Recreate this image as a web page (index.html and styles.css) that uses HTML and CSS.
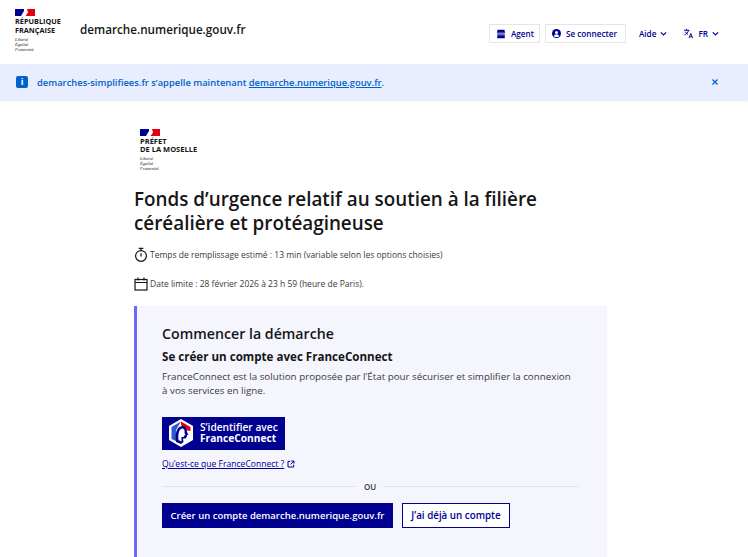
FILE: index.html
```html
<!DOCTYPE html>
<html lang="fr">
  <head>
    <meta charset="UTF-8" />
    <meta name="viewport" content="width=device-width, initial-scale=1.0" />
    <title>demarche.numerique.gouv.fr</title>
    <link rel="stylesheet" href="styles.css">
  </head>
  <body>
    <header class="header">
      <div class="brand">
        <div class="marianne">
          <svg class="flag" width="20" height="7" viewBox="0 0 20 7">
            <rect width="9" height="7" fill="#000091" />
            <path d="M6 7 L9 2 L9 7 Z" fill="#fff" />
            <path d="M12 0 L20 0 L20 7 L10.500 7 L13 3.500 Z" fill="#e1000f" />
          </svg>
          <div class="marianne-name">RÉPUBLIQUE<br>FRANÇAISE</div>
          <div class="marianne-motto">Liberté<br>Égalité<br>Fraternité</div>
        </div>
        <div class="site-name">demarche.numerique.gouv.fr</div>
      </div>
      <nav class="nav">
        <a class="nav-btn nav-agent">
          <svg width="10" height="10" viewBox="0 0 24 24" fill="#000091"><path d="M4 2h16l2 7H2zM3 11h18v11H3z" /><path d="M3 14h18" stroke="#fff" stroke-width="1.500" /></svg>
          Agent
        </a>
        <a class="nav-btn nav-login">
          <svg width="9" height="9" viewBox="0 0 24 24"><circle cx="12" cy="12" r="12" fill="#000091" /><circle cx="12" cy="9.500" r="4" fill="#fff" /><path d="M5 19c1-3 4-5 7-5s6 2 7 5c-3 3-11 3-14 0z" fill="#fff" /></svg>
          Se connecter
        </a>
        <a class="nav-link nav-aide">
          Aide
          <svg width="7" height="7" viewBox="0 0 24 24" fill="none" stroke="#000091" stroke-width="4"><path d="M3 8l9 9 9-9" /></svg>
        </a>
        <a class="nav-link">
          <svg width="11" height="11" viewBox="0 0 24 24" fill="none" stroke="#000091" stroke-width="2"><path d="M2 5h12M8 2v3M12 5c-1 5-4 8-9 10M5 8c1 3 4 5 6 6M13 22l4-10 4 10M14.500 19h5" /></svg>
          FR
          <svg width="7" height="7" viewBox="0 0 24 24" fill="none" stroke="#000091" stroke-width="4"><path d="M3 8l9 9 9-9" /></svg>
        </a>
      </nav>
    </header>

    <div class="notice">
      <div class="notice-text">
        <span class="notice-icon">i</span>
        <span>demarches-simplifiees.fr s’appelle maintenant <a class="notice-link">demarche.numerique.gouv.fr</a>.</span>
      </div>
      <svg class="notice-close" width="6" height="6" viewBox="0 0 6 6" fill="none" stroke="#0063cb" stroke-width="1.200"><path d="M.5.500l5 5M5.500.500l-5 5" /></svg>
    </div>

    <main class="content">
      <div class="prefet">
        <svg class="flag" width="20" height="7" viewBox="0 0 20 7">
          <rect width="9" height="7" fill="#000091" />
          <path d="M6 7 L9 2 L9 7 Z" fill="#fff" />
          <path d="M12 0 L20 0 L20 7 L10.500 7 L13 3.500 Z" fill="#e1000f" />
        </svg>
        <div class="prefet-name">PRÉFET<br>DE LA MOSELLE</div>
        <div class="marianne-motto">Liberté<br>Égalité<br>Fraternité</div>
      </div>

      <h1 class="title">Fonds d’urgence relatif au soutien à la filière céréalière et protéagineuse</h1>

      <p class="meta meta-time">
        <svg width="14" height="16" viewBox="0 0 15 16" fill="none" stroke="#161616" stroke-width="1.300"><circle cx="7.500" cy="9" r="5.800" /><path d="M5 1h5M7.500 1v2M7.500 6v3.500" /></svg>
        Temps de remplissage estimé : 13 min (variable selon les options choisies)
      </p>
      <p class="meta meta-date">
        <svg width="14" height="14" viewBox="0 0 14 14" fill="none" stroke="#161616" stroke-width="1.200"><rect x="1" y="2.500" width="12" height="10.500" /><path d="M1 5.500h12M4 .5v3M10 .5v3" /></svg>
        Date limite : 28 février 2026 à 23 h 59 (heure de Paris).
      </p>

      <section class="card">
        <h2 class="card-title">Commencer la démarche</h2>
        <h3 class="card-subtitle">Se créer un compte avec FranceConnect</h3>
        <p class="card-text">FranceConnect est la solution proposée par l’État pour sécuriser et simplifier la connexion à vos services en ligne.</p>

        <a class="fc-btn">
          <svg width="24" height="28" viewBox="0 0 24 28">
            <path d="M12 0 L24 7 V21 L12 28 L0 21 V7 Z" fill="#fff" />
            <path d="M12 2.500 L21.500 8 V12 L16 11 L12 6 Z" fill="#e1000f" />
            <path d="M12 2.500 L2.500 8 V20 L7 22 V11 Z" fill="#2a5bd0" />
            <path d="M7 23 C6 15 7 8 13 7 C17 6.500 18 10 18 13 L19.500 16 H18 C18 19 16.500 20 14 19.500 L14.500 23 L12 25 Z" fill="#000091" />
            <path d="M9.500 21 C9 15 10 10 13 9.500 C15.500 9.500 16 12 15.500 14 L16.500 16 H15.500 C15.500 18 14.500 18 12.500 18 L12.500 22.500 Z" fill="#fff" />
          </svg>
          <span>S’identifier avec<br><strong>FranceConnect</strong></span>
        </a>
        <a class="fc-link">Qu’est-ce que FranceConnect ?
          <svg width="8" height="8" viewBox="0 0 24 24" fill="none" stroke="#000091" stroke-width="3"><path d="M10 4H3v17h17v-7M13 3h8v8M21 3L11 13" /></svg>
        </a>

        <div class="divider"><span>OU</span></div>

        <div class="actions">
          <a class="btn btn-primary">Créer un compte demarche.numerique.gouv.fr</a>
          <a class="btn btn-secondary">J’ai déjà un compte</a>
        </div>
      </section>
    </main>
  </body>
</html>
```

FILE: styles.css
```css
* {
  margin: 0;
  padding: 0;
  box-sizing: border-box;
}

html,
body {
  height: 557px;
  overflow: hidden;
}

body {
  font-family: "Open Sans", "Liberation Sans", sans-serif;
  background: #fff;
  color: #161616;
}

svg {
  display: block;
  flex-shrink: 0;
}

.header {
  height: 64px;
  display: flex;
  justify-content: space-between;
  align-items: flex-start;
  padding: 0 29px 0 15px;
}

.brand {
  display: flex;
  align-items: flex-start;
}

.marianne {
  width: 65px;
  padding-top: 9px;
}

.marianne-name {
  font-size: 7.300px;
  font-weight: 700;
  line-height: 8.500px;
  margin-top: 1px;
  color: #161616;
}

.marianne-motto {
  font-family: "Liberation Serif", serif;
  font-style: italic;
  font-size: 4.500px;
  line-height: 5.200px;
  margin-top: 3px;
  color: #161616;
}

.site-name {
  font-size: 11.700px;
  font-weight: 600;
  line-height: 18px;
  margin-top: 20px;
}

.nav {
  display: flex;
  align-items: center;
  margin-top: 24px;
  color: #000091;
  font-size: 8.200px;
  font-weight: 600;
  white-space: nowrap;
}

.nav-btn {
  height: 19px;
  display: flex;
  align-items: center;
  gap: 5px;
  border: 1px solid #e5e5e5;
  padding: 0 6px;
  margin-right: 5px;
}

.nav-agent {
  width: 51px;
}

.nav-login {
  width: 81px;
}

.nav-link {
  display: flex;
  align-items: center;
  gap: 4px;
}

.nav-aide {
  margin-left: 8px;
  margin-right: 16px;
}

.notice {
  height: 36px;
  background: #e8edff;
  box-shadow: 0 1px 2px rgba(0, 0, 0, 0.1);
  display: flex;
  align-items: center;
  justify-content: space-between;
  padding: 0 30px 0 16px;
  font-size: 9.400px;
  font-weight: 600;
  color: #0063cb;
}

.notice-text {
  display: flex;
  align-items: center;
  gap: 9px;
}

.notice-icon {
  width: 12px;
  height: 12px;
  border-radius: 2px;
  background: #0063cb;
  color: #fff;
  font-size: 9px;
  font-weight: 700;
  line-height: 12px;
  text-align: center;
}

.notice-link {
  text-decoration: underline;
}

.content {
  width: 473px;
  margin-left: 134px;
}

.prefet {
  padding: 29px 0 0 6px;
}

.prefet-name {
  font-size: 7.500px;
  font-weight: 700;
  line-height: 7.500px;
  margin-top: 2px;
}

.title {
  font-size: 18.850px;
  font-weight: 600;
  line-height: 24px;
  margin-top: 15px;
  color: #161616;
}

.meta {
  display: flex;
  align-items: center;
  gap: 2px;
  font-size: 8.500px;
  color: #3a3a3a;
  height: 16px;
}

.meta-time {
  margin-top: 12px;
}

.meta-date {
  margin-top: 13px;
}

.card {
  height: 251px;
  margin-top: 14px;
  background: #f5f5fe;
  border-left: 3px solid #6a6af4;
  padding: 19px 29px 0 25px;
}

.card-title {
  font-size: 14.200px;
  font-weight: 600;
  line-height: 18px;
}

.card-subtitle {
  font-size: 11.600px;
  font-weight: 700;
  line-height: 16px;
  margin-top: 6px;
}

.card-text {
  max-width: 412px;
  font-size: 9.800px;
  line-height: 14px;
  color: #3a3a3a;
  margin-top: 5px;
}

.fc-btn {
  width: 123px;
  height: 33px;
  margin-top: 19px;
  background: #000091;
  color: #fff;
  display: flex;
  align-items: center;
  gap: 7px;
  padding-left: 7px;
  font-size: 10.200px;
  font-weight: 600;
  line-height: 11px;
}

.fc-btn strong {
  font-weight: 700;
}

.fc-link {
  display: flex;
  align-items: center;
  gap: 3px;
  margin-top: 8px;
  font-size: 8.550px;
  line-height: 12px;
  color: #000091;
  text-decoration: underline;
}

.divider {
  display: flex;
  align-items: center;
  gap: 7px;
  margin-top: 11px;
  font-size: 8px;
  font-weight: 600;
  line-height: 12px;
  color: #3a3a3a;
}

.divider::before,
.divider::after {
  content: "";
  flex: 1;
  height: 1px;
  background: #e5e5e5;
}

.actions {
  display: flex;
  gap: 9px;
  margin-top: 10px;
}

.btn {
  height: 25px;
  display: flex;
  align-items: center;
  justify-content: center;
  font-size: 9.500px;
  font-weight: 600;
}

.btn-primary {
  width: 231px;
  background: #000091;
  color: #fff;
}

.btn-secondary {
  width: 108px;
  font-size: 9.800px;
  border: 1px solid #000091;
  background: #fff;
  color: #000091;
}
```
